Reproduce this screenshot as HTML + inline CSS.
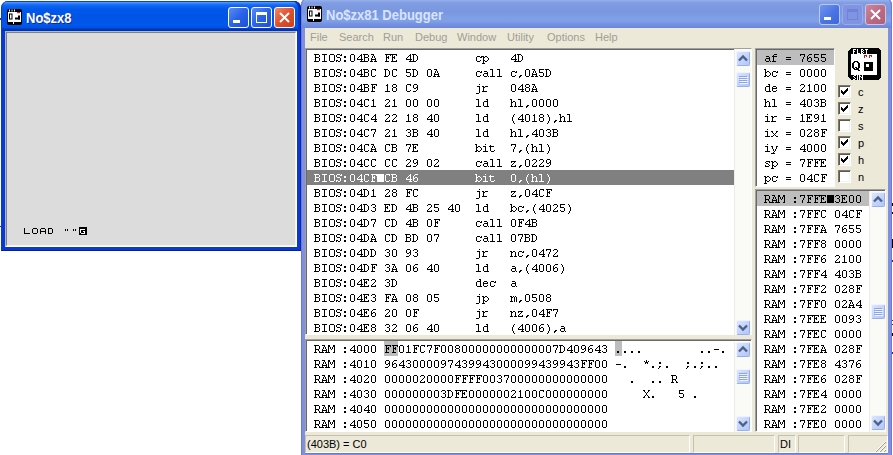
<!DOCTYPE html>
<html><head><meta charset="utf-8">
<style>
*{margin:0;padding:0;box-sizing:border-box}
html,body{width:893px;height:455px;overflow:hidden;background:#fff;position:relative}
.a{position:absolute}
.mono{font-family:"Liberation Mono",monospace;font-size:12px;letter-spacing:-0.2px;line-height:15px;white-space:pre;color:#000;-webkit-text-stroke:0px currentColor}
.sans{font-family:"Liberation Sans",sans-serif}
#lw{left:1px;top:1px;width:300px;height:250px;background:#0A38D0;border-radius:7px 7px 0 0;overflow:hidden;box-shadow:inset 0 -1px 0 #0020A0, inset -1px 0 0 #0828B0}
#lwt{left:0;top:0;width:300px;height:30px;background:linear-gradient(#1040C8 0px,#1040C8 1px,#58A0FF 1px,#3A88FC 2px,#1468F4 4px,#0058EA 8px,#0054E6 16px,#0058EE 24px,#0050E0 27px,#0038B8 28px,#0030A8 30px);border-radius:7px 7px 0 0;box-shadow:inset 1px 0 0 #0A3CC8, inset -1px 0 0 #0026A8, inset -3px 0 0 #0836C4}
#lwc{left:5px;top:31px;width:292px;height:216px;background:#DCDCDC;border-top:1px solid #A8B8E0;border-left:1px solid #A8B8E0;border-right:1px solid #fff;border-bottom:1px solid #fff}
#lwc2{left:6px;top:32px;width:290px;height:214px;border-top:1px solid #808080;border-left:1px solid #808080;border-right:1px solid #F4F4F4;border-bottom:1px solid #F4F4F4}
.btn{width:21px;height:21px;border:1px solid #fff;border-radius:3px}
.bb{background:linear-gradient(135deg,#5A8CF5,#2A62E8 50%,#1E50D8)}
.br{background:linear-gradient(135deg,#F08866,#E0502A 50%,#C8401E)}
#dw{left:301px;top:-2px;width:591px;height:461px;background:#7F90E2;border-radius:7px 7px 0 0;box-shadow:inset 1px 0 0 #6C7AD4, inset -1px 0 0 #6C7AD4}
#dwt{left:0;top:0;width:591px;height:30px;background:linear-gradient(#A8C0F4 0px,#96B0EC 2px,#809CE2 5px,#7A96DF 14px,#7E9EE6 19px,#80A0E8 23px,#7692E0 26px,#6A86DA 30px);border-radius:7px 7px 0 0;box-shadow:inset 1px 0 0 #7080D8, inset -1px 0 0 #6C7AD4}
#menu{left:305px;top:28px;width:583px;height:21px;background:#ECE9D8}
.mi{position:absolute;top:31px;font-family:"Liberation Sans",sans-serif;font-size:11px;color:#A09E94}
#body{left:305px;top:48px;width:583px;height:405px;background:#ECE9D8}
.view{background:#fff;border-top:1px solid #A0A0A0;border-left:1px solid #A0A0A0;border-right:1px solid #fff;border-bottom:1px solid #fff;box-shadow:inset 1px 1px 0 #696969}
.sbtn{width:14px;height:15px;border-radius:2px;background:linear-gradient(135deg,#DCE6FE,#C2D3FC 55%,#B2C6F8);border:1px solid;border-color:#F0F4FF #98B0EA #98B0EA #F0F4FF}
.trk{width:17px;background:#FAFAF6;border-left:1px solid #EEEDE5}
.hl{background:#BDBDBD}
.hld{background:#808080}
.chk{width:13px;height:13px;background:#fff;border-top:1px solid #7C7A6C;border-left:1px solid #7C7A6C;border-right:1px solid #fff;border-bottom:1px solid #fff;box-shadow:inset 1px 1px 0 #5C5A50, inset -1px -1px 0 #F4F2EA}
.fl{font-family:"Liberation Sans",sans-serif;font-size:11px;color:#000}
.sp{border-top:1px solid #C5C1AC;border-left:1px solid #C5C1AC;border-right:1px solid #fff;border-bottom:1px solid #fff;height:18px;top:435px}
</style></head><body>
<div id="lw" class="a"><div id="lwt" class="a"></div></div>
<svg class="a" style="left:7px;top:9px" width="15" height="16" viewBox="0 0 15 16">
<rect x="0" y="0" width="15" height="16" rx="2" fill="#000"/>
<rect x="1" y="3" width="13" height="10" fill="#fff"/>
<rect x="2" y="0.5" width="1" height="2" fill="#fff"/><rect x="4.5" y="0.5" width="1" height="2" fill="#fff"/><rect x="7" y="0.5" width="1" height="2" fill="#fff"/>
<rect x="2" y="4.5" width="3.5" height="6" fill="#000"/><rect x="3" y="5.5" width="1.5" height="4" fill="#fff"/>
<rect x="8" y="8.5" width="5" height="2" fill="#000"/><rect x="11" y="6.5" width="2" height="4" fill="#000"/>
<rect x="10" y="3" width="3" height="1.2" fill="#d02020"/>
<rect x="6" y="13" width="1" height="2" fill="#fff"/>
</svg>
<div class="a sans" style="left:26px;top:10px;font-size:13px;font-weight:bold;color:#fff;text-shadow:1px 1px 0 #0A2C9C;transform:scaleY(1.1);transform-origin:0 0">No$zx8</div>
<div class="a btn bb" style="left:228px;top:7px"></div>
<div class="a btn bb" style="left:251px;top:7px"></div>
<div class="a btn br" style="left:274px;top:7px"></div>
<div class="a" style="left:233px;top:20px;width:7px;height:3px;background:#fff"></div>
<div class="a" style="left:256px;top:12px;width:11px;height:11px;border:1px solid #fff;border-top-width:3px"></div>
<svg class="a" style="left:274px;top:7px" width="21" height="21"><path d="M6 6L15 15M15 6L6 15" stroke="#fff" stroke-width="2"/></svg>
<div id="lwc" class="a"></div><div id="lwc2" class="a"></div>
<svg class="a" style="left:23px;top:227px" width="66" height="9" viewBox="0 0 66 9" shape-rendering="crispEdges">
<g fill="#000">
<rect x="1" y="1" width="1" height="6"/><rect x="1" y="6" width="6" height="1"/>
<rect x="10" y="1" width="4" height="1"/><rect x="10" y="6" width="4" height="1"/><rect x="9" y="2" width="1" height="4"/><rect x="14" y="2" width="1" height="4"/>
<rect x="18" y="1" width="4" height="1"/><rect x="17" y="2" width="1" height="5"/><rect x="22" y="2" width="1" height="5"/><rect x="17" y="4" width="6" height="1"/>
<rect x="25" y="1" width="4" height="1"/><rect x="25" y="6" width="4" height="1"/><rect x="25" y="1" width="1" height="6"/><rect x="29" y="2" width="1" height="4"/>
<rect x="42" y="2" width="1" height="2"/><rect x="44" y="2" width="1" height="2"/>
<rect x="50" y="2" width="1" height="2"/><rect x="52" y="2" width="1" height="2"/>
<rect x="56" y="0" width="8" height="8"/>
</g>
<g fill="#fff"><rect x="58" y="2" width="4" height="1"/><rect x="57" y="2" width="1" height="4"/><rect x="58" y="6" width="4" height="1"/><rect x="61" y="4" width="1" height="2"/><rect x="60" y="4" width="1" height="1"/></g>
</svg>
<div id="dw" class="a"><div id="dwt" class="a"></div></div>
<svg class="a" style="left:307px;top:6px" width="15" height="16" viewBox="0 0 15 16">
<rect x="0" y="0" width="15" height="16" rx="2" fill="#000"/>
<rect x="1" y="3" width="13" height="10" fill="#fff"/>
<rect x="2" y="0.5" width="1" height="2" fill="#fff"/><rect x="4.5" y="0.5" width="1" height="2" fill="#fff"/><rect x="7" y="0.5" width="1" height="2" fill="#fff"/>
<rect x="2" y="4.5" width="3.5" height="6" fill="#000"/><rect x="3" y="5.5" width="1.5" height="4" fill="#fff"/>
<rect x="8" y="8.5" width="5" height="2" fill="#000"/><rect x="11" y="6.5" width="2" height="4" fill="#000"/>
<rect x="10" y="3" width="3" height="1.2" fill="#d02020"/>
<rect x="6" y="13" width="1" height="2" fill="#fff"/>
</svg>
<div class="a sans" style="left:326px;top:7px;font-size:13px;font-weight:bold;color:#D8E4FA;transform:scaleY(1.1);transform-origin:0 0">No$zx81 Debugger</div>
<div class="a btn" style="left:819px;top:4px;background:linear-gradient(135deg,#7096EE,#4A74E4 55%,#3E66DC);border-color:#B8CAF2"></div>
<div class="a btn" style="left:842px;top:4px;background:#8094E2;border-color:#98AAEA"></div>
<div class="a btn" style="left:865px;top:4px;background:linear-gradient(135deg,#C888A0,#B86880 60%,#B0607A);border-color:#D8C0D8"></div>
<div class="a" style="left:824px;top:17px;width:7px;height:3px;background:#fff"></div>
<div class="a" style="left:847px;top:9px;width:11px;height:11px;border:1px solid #6E84D8;border-top-width:3px"></div>
<svg class="a" style="left:865px;top:4px" width="21" height="21"><path d="M6 6L15 15M15 6L6 15" stroke="#fff" stroke-width="2"/></svg>
<div id="menu" class="a"></div><div id="body" class="a"></div>
<div class="mi" style="left:310px">File</div>
<div class="mi" style="left:339px">Search</div>
<div class="mi" style="left:383px">Run</div>
<div class="mi" style="left:415px">Debug</div>
<div class="mi" style="left:457px">Window</div>
<div class="mi" style="left:507px">Utility</div>
<div class="mi" style="left:547px">Options</div>
<div class="mi" style="left:595px">Help</div>
<div class="a view" style="left:305px;top:48px;width:447px;height:287px"></div>
<div class="a hld" style="left:307px;top:170px;width:427px;height:15px"></div>
<div class="a" style="left:377px;top:174px;width:7px;height:8px;background:#fff"></div>
<div class="a trk" style="left:734px;top:49px;height:286px"></div><div class="a sbtn" style="left:736px;top:51px"></div><svg class="a" style="left:736px;top:51px" width="14" height="15"><path d="M3 9.5L7 5.5L11 9.5" fill="none" stroke="#4D6185" stroke-width="2.4"/></svg><div class="a sbtn" style="left:736px;top:72px;height:15px"></div><svg class="a" style="left:736px;top:72px" width="14" height="15"><path d="M3 4.5h8M3 6.5h8M3 8.5h8M3 10.5h8" stroke="#8CA4E4" stroke-width="1"/><path d="M4 5.5h8M4 7.5h8M4 9.5h8M4 11.5h8" stroke="#EEF3FF" stroke-width="1"/></svg><div class="a sbtn" style="left:736px;top:320px"></div><svg class="a" style="left:736px;top:320px" width="14" height="15"><path d="M3 5.5L7 9.5L11 5.5" fill="none" stroke="#4D6185" stroke-width="2.4"/></svg>
<div class="a view" style="left:305px;top:339px;width:447px;height:93px"></div>
<div class="a hl" style="left:384px;top:341px;width:14px;height:15px"></div>
<div class="a hl" style="left:615px;top:341px;width:7px;height:15px"></div>
<div class="a trk" style="left:734px;top:342px;height:90px"></div><div class="a sbtn" style="left:736px;top:342px"></div><svg class="a" style="left:736px;top:342px" width="14" height="15"><path d="M3 9.5L7 5.5L11 9.5" fill="none" stroke="#4D6185" stroke-width="2.4"/></svg><div class="a sbtn" style="left:736px;top:369px;height:15px"></div><svg class="a" style="left:736px;top:369px" width="14" height="15"><path d="M3 4.5h8M3 6.5h8M3 8.5h8M3 10.5h8" stroke="#8CA4E4" stroke-width="1"/><path d="M4 5.5h8M4 7.5h8M4 9.5h8M4 11.5h8" stroke="#EEF3FF" stroke-width="1"/></svg><div class="a sbtn" style="left:736px;top:416px"></div><svg class="a" style="left:736px;top:416px" width="14" height="15"><path d="M3 5.5L7 9.5L11 5.5" fill="none" stroke="#4D6185" stroke-width="2.4"/></svg>
<div class="a view" style="left:755px;top:48px;width:80px;height:139px"></div>
<div class="a hl" style="left:757px;top:50px;width:77px;height:15px"></div>
<div class="a chk" style="left:838px;top:85px"></div>
<svg class="a" style="left:838px;top:85px" width="13" height="13" shape-rendering="crispEdges"><path d="M9 3h1v1h-1zM8 4h2v1h-2zM3 5h1v1h-1zM7 5h3v1h-3zM3 6h2v1h-2zM6 6h3v1h-3zM3 7h5v1h-5zM4 8h3v1h-3zM5 9h1v1h-1z" fill="#000"/></svg>
<div class="a fl" style="left:858px;top:86px">c</div>
<div class="a chk" style="left:838px;top:102px"></div>
<svg class="a" style="left:838px;top:102px" width="13" height="13" shape-rendering="crispEdges"><path d="M9 3h1v1h-1zM8 4h2v1h-2zM3 5h1v1h-1zM7 5h3v1h-3zM3 6h2v1h-2zM6 6h3v1h-3zM3 7h5v1h-5zM4 8h3v1h-3zM5 9h1v1h-1z" fill="#000"/></svg>
<div class="a fl" style="left:858px;top:103px">z</div>
<div class="a chk" style="left:838px;top:119px"></div>
<div class="a fl" style="left:858px;top:120px">s</div>
<div class="a chk" style="left:838px;top:136px"></div>
<svg class="a" style="left:838px;top:136px" width="13" height="13" shape-rendering="crispEdges"><path d="M9 3h1v1h-1zM8 4h2v1h-2zM3 5h1v1h-1zM7 5h3v1h-3zM3 6h2v1h-2zM6 6h3v1h-3zM3 7h5v1h-5zM4 8h3v1h-3zM5 9h1v1h-1z" fill="#000"/></svg>
<div class="a fl" style="left:858px;top:137px">p</div>
<div class="a chk" style="left:838px;top:153px"></div>
<svg class="a" style="left:838px;top:153px" width="13" height="13" shape-rendering="crispEdges"><path d="M9 3h1v1h-1zM8 4h2v1h-2zM3 5h1v1h-1zM7 5h3v1h-3zM3 6h2v1h-2zM6 6h3v1h-3zM3 7h5v1h-5zM4 8h3v1h-3zM5 9h1v1h-1z" fill="#000"/></svg>
<div class="a fl" style="left:858px;top:154px">h</div>
<div class="a chk" style="left:838px;top:170px"></div>
<div class="a fl" style="left:858px;top:171px">n</div>
<svg class="a" style="left:848px;top:48px" width="33" height="32" viewBox="0 0 33 32" shape-rendering="crispEdges">
<path d="M3 0h27l3 3v26l-3 3h-27l-3-3v-26z" fill="#000"/>
<rect x="3" y="6" width="26" height="21" fill="#fff"/>
<path d="M5 1h3v1h-3zM5 2h1v1h-1zM5 3h2v1h-2zM5 4h1v1h-1zM5 5h1v1h-1zM9 1h1v1h-1zM9 2h1v1h-1zM9 3h1v1h-1zM9 4h1v1h-1zM9 5h3v1h-3zM13 1h2v1h-2zM13 2h1v1h-1zM15 2h1v1h-1zM13 3h2v1h-2zM13 4h1v1h-1zM15 4h1v1h-1zM13 5h2v1h-2zM17 1h3v1h-3zM18 2h1v1h-1zM18 3h1v1h-1zM18 4h1v1h-1zM18 5h1v1h-1zM6 27h2v1h-2zM5 28h1v1h-1zM6 29h1v1h-1zM7 30h1v1h-1zM5 31h2v1h-2zM9 27h1v1h-1zM9 28h1v1h-1zM9 29h1v1h-1zM9 30h1v1h-1zM9 31h1v1h-1zM11 27h1v1h-1zM14 27h1v1h-1zM11 28h2v1h-2zM14 28h1v1h-1zM11 29h1v1h-1zM13 29h2v1h-2zM11 30h1v1h-1zM14 30h1v1h-1zM11 31h1v1h-1zM14 31h1v1h-1z" fill="#fff"/>
<path d="M6 13h4v1h-4zM5 14h2v1h-2zM9 14h2v1h-2zM4 15h2v1h-2zM10 15h2v1h-2zM4 16h2v1h-2zM10 16h2v1h-2zM4 17h2v1h-2zM10 17h2v1h-2zM4 18h2v1h-2zM10 18h2v1h-2zM4 19h2v1h-2zM7 19h2v1h-2zM10 19h2v1h-2zM5 20h2v1h-2zM8 20h3v1h-3zM6 21h5v1h-5zM10 22h2v1h-2z" fill="#000"/>
<rect x="16" y="14" width="9" height="9" fill="#000"/>
<rect x="18" y="16" width="3" height="3" fill="#fff"/>
<path d="M16 7h3v1h-3zM16 8h1v1h-1zM18 8h1v1h-1zM16 9h1v1h-1zM21 7h3v1h-3zM21 8h1v1h-1zM23 8h1v1h-1zM21 9h1v1h-1z" fill="#D01010"/>
</svg>
<div class="a view" style="left:755px;top:189px;width:131px;height:243px"></div>
<div class="a hl" style="left:757px;top:191px;width:112px;height:15px"></div>
<div class="a" style="left:827px;top:195px;width:7px;height:8px;background:#000"></div>
<div class="a trk" style="left:869px;top:191px;height:241px"></div><div class="a sbtn" style="left:871px;top:192px"></div><svg class="a" style="left:871px;top:192px" width="14" height="15"><path d="M3 9.5L7 5.5L11 9.5" fill="none" stroke="#4D6185" stroke-width="2.4"/></svg><div class="a sbtn" style="left:871px;top:304px;height:15px"></div><svg class="a" style="left:871px;top:304px" width="14" height="15"><path d="M3 4.5h8M3 6.5h8M3 8.5h8M3 10.5h8" stroke="#8CA4E4" stroke-width="1"/><path d="M4 5.5h8M4 7.5h8M4 9.5h8M4 11.5h8" stroke="#EEF3FF" stroke-width="1"/></svg><div class="a sbtn" style="left:871px;top:415px"></div><svg class="a" style="left:871px;top:415px" width="14" height="15"><path d="M3 5.5L7 9.5L11 5.5" fill="none" stroke="#4D6185" stroke-width="2.4"/></svg>
<div class="a sp" style="left:305px;width:385px"></div>
<div class="a sp" style="left:693px;width:82px"></div>
<div class="a sp" style="left:778px;width:18px"></div>
<div class="a sp" style="left:798px;width:47px"></div>
<div class="a sp" style="left:848px;width:40px"></div>
<div class="a sans" style="left:307px;top:438px;font-size:11px;color:#000">(403B) = C0</div>
<div class="a sans" style="left:780px;top:438px;font-size:11px;color:#000">DI</div>
<div class="a" style="left:305px;top:453px;width:583px;height:1px;background:#6C7AC8"></div>
<svg class="a" style="left:874px;top:440px" width="13" height="13"><path d="M12 1L1 12M12 5L5 12M12 9L9 12" stroke="#fff" stroke-width="1"/><path d="M12 2L2 12M12 6L6 12M12 10L10 12" stroke="#A0A090" stroke-width="1"/></svg>
<div class="a" style="left:0px;top:18px;width:1px;height:2px;background:#403880"></div>
<div class="a" style="left:0px;top:226px;width:1px;height:1px;background:#203080"></div>
<div class="a" style="left:892px;top:203px;width:1px;height:3px;background:#000"></div>
<div class="a" style="left:892px;top:212px;width:1px;height:2px;background:#000"></div>
<div class="a" style="left:892px;top:239px;width:1px;height:9px;background:#000"></div>
<div class="a" style="left:892px;top:260px;width:1px;height:2px;background:#203080"></div>
<div class="a" style="left:892px;top:320px;width:1px;height:1px;background:#203080"></div>
<div class="a" style="left:892px;top:324px;width:1px;height:1px;background:#203080"></div>
<div class="a" style="left:892px;top:333px;width:1px;height:3px;background:#000"></div>
<div class="a" style="left:892px;top:352px;width:1px;height:2px;background:#203080"></div>
<svg class="a" style="left:0;top:0" width="893" height="455" shape-rendering="crispEdges"><defs><path id="g_lp" d="M4 0h1v1h-1zM3 1h1v1h-1zM3 2h1v1h-1zM2 3h1v1h-1zM2 4h1v1h-1zM2 5h1v1h-1zM2 6h1v1h-1zM3 7h1v1h-1zM3 8h1v1h-1zM4 9h1v1h-1z"/><path id="g_rp" d="M2 0h1v1h-1zM3 1h1v1h-1zM3 2h1v1h-1zM4 3h1v1h-1zM4 4h1v1h-1zM4 5h1v1h-1zM4 6h1v1h-1zM3 7h1v1h-1zM3 8h1v1h-1zM2 9h1v1h-1z"/><path id="g_ast" d="M3 0h1v1h-1zM1 1h1v1h-1zM3 1h1v1h-1zM5 1h1v1h-1zM2 2h3v1h-3zM2 3h1v1h-1zM4 3h1v1h-1z"/><path id="g_com" d="M3 6h2v1h-2zM2 7h2v1h-2zM2 8h1v1h-1z"/><path id="g_min" d="M1 4h5v1h-5z"/><path id="g_dot" d="M2 6h2v1h-2zM2 7h2v1h-2z"/><path id="gD0" d="M2 0h3v1h-3zM1 1h1v1h-1zM5 1h1v1h-1zM1 2h1v1h-1zM5 2h1v1h-1zM1 3h1v1h-1zM5 3h1v1h-1zM1 4h1v1h-1zM5 4h1v1h-1zM1 5h1v1h-1zM5 5h1v1h-1zM1 6h1v1h-1zM5 6h1v1h-1zM2 7h3v1h-3z"/><path id="gD1" d="M3 0h1v1h-1zM2 1h2v1h-2zM3 2h1v1h-1zM3 3h1v1h-1zM3 4h1v1h-1zM3 5h1v1h-1zM3 6h1v1h-1zM1 7h5v1h-5z"/><path id="gD2" d="M2 0h3v1h-3zM1 1h1v1h-1zM5 1h1v1h-1zM5 2h1v1h-1zM4 3h1v1h-1zM3 4h1v1h-1zM2 5h1v1h-1zM1 6h1v1h-1zM5 6h1v1h-1zM1 7h5v1h-5z"/><path id="gD3" d="M2 0h3v1h-3zM1 1h1v1h-1zM5 1h1v1h-1zM5 2h1v1h-1zM3 3h2v1h-2zM5 4h1v1h-1zM5 5h1v1h-1zM1 6h1v1h-1zM5 6h1v1h-1zM2 7h3v1h-3z"/><path id="gD4" d="M5 0h1v1h-1zM4 1h2v1h-2zM3 2h1v1h-1zM5 2h1v1h-1zM2 3h1v1h-1zM5 3h1v1h-1zM1 4h1v1h-1zM5 4h1v1h-1zM1 5h6v1h-6zM5 6h1v1h-1zM4 7h3v1h-3z"/><path id="gD5" d="M1 0h5v1h-5zM1 1h1v1h-1zM1 2h1v1h-1zM1 3h4v1h-4zM5 4h1v1h-1zM5 5h1v1h-1zM1 6h1v1h-1zM5 6h1v1h-1zM2 7h3v1h-3z"/><path id="gD6" d="M3 0h3v1h-3zM2 1h1v1h-1zM1 2h1v1h-1zM1 3h1v1h-1zM3 3h2v1h-2zM1 4h2v1h-2zM5 4h1v1h-1zM1 5h1v1h-1zM5 5h1v1h-1zM1 6h1v1h-1zM5 6h1v1h-1zM2 7h3v1h-3z"/><path id="gD7" d="M1 0h5v1h-5zM1 1h1v1h-1zM5 1h1v1h-1zM5 2h1v1h-1zM4 3h1v1h-1zM4 4h1v1h-1zM3 5h1v1h-1zM3 6h1v1h-1zM3 7h1v1h-1z"/><path id="gD8" d="M2 0h3v1h-3zM1 1h1v1h-1zM5 1h1v1h-1zM1 2h1v1h-1zM5 2h1v1h-1zM2 3h3v1h-3zM1 4h1v1h-1zM5 4h1v1h-1zM1 5h1v1h-1zM5 5h1v1h-1zM1 6h1v1h-1zM5 6h1v1h-1zM2 7h3v1h-3z"/><path id="gD9" d="M2 0h3v1h-3zM1 1h1v1h-1zM5 1h1v1h-1zM1 2h1v1h-1zM5 2h1v1h-1zM1 3h1v1h-1zM4 3h2v1h-2zM2 4h2v1h-2zM5 4h1v1h-1zM5 5h1v1h-1zM4 6h1v1h-1zM1 7h3v1h-3z"/><path id="g_col" d="M2 2h2v1h-2zM2 3h2v1h-2zM2 6h2v1h-2zM2 7h2v1h-2z"/><path id="g_sem" d="M2 2h2v1h-2zM2 3h2v1h-2zM2 6h2v1h-2zM2 7h1v1h-1zM1 8h1v1h-1z"/><path id="g_eq" d="M1 3h5v1h-5zM1 5h5v1h-5z"/><path id="gUA" d="M1 0h3v1h-3zM3 1h1v1h-1zM2 2h1v1h-1zM4 2h1v1h-1zM2 3h1v1h-1zM4 3h1v1h-1zM1 4h1v1h-1zM5 4h1v1h-1zM1 5h5v1h-5zM1 6h1v1h-1zM5 6h1v1h-1zM0 7h3v1h-3zM4 7h3v1h-3z"/><path id="gUB" d="M0 0h5v1h-5zM1 1h1v1h-1zM5 1h1v1h-1zM1 2h1v1h-1zM5 2h1v1h-1zM1 3h4v1h-4zM1 4h1v1h-1zM5 4h1v1h-1zM1 5h1v1h-1zM5 5h1v1h-1zM1 6h1v1h-1zM5 6h1v1h-1zM0 7h5v1h-5z"/><path id="gUC" d="M2 0h4v1h-4zM1 1h1v1h-1zM5 1h1v1h-1zM1 2h1v1h-1zM1 3h1v1h-1zM1 4h1v1h-1zM1 5h1v1h-1zM1 6h1v1h-1zM5 6h1v1h-1zM2 7h3v1h-3z"/><path id="gUD" d="M0 0h4v1h-4zM1 1h1v1h-1zM4 1h1v1h-1zM1 2h1v1h-1zM5 2h1v1h-1zM1 3h1v1h-1zM5 3h1v1h-1zM1 4h1v1h-1zM5 4h1v1h-1zM1 5h1v1h-1zM5 5h1v1h-1zM1 6h1v1h-1zM4 6h1v1h-1zM0 7h4v1h-4z"/><path id="gUE" d="M0 0h6v1h-6zM1 1h1v1h-1zM5 1h1v1h-1zM1 2h1v1h-1zM3 2h1v1h-1zM1 3h3v1h-3zM1 4h1v1h-1zM3 4h1v1h-1zM1 5h1v1h-1zM1 6h1v1h-1zM5 6h1v1h-1zM0 7h6v1h-6z"/><path id="gUF" d="M1 0h6v1h-6zM2 1h1v1h-1zM6 1h1v1h-1zM2 2h1v1h-1zM4 2h1v1h-1zM2 3h3v1h-3zM2 4h1v1h-1zM4 4h1v1h-1zM2 5h1v1h-1zM2 6h1v1h-1zM1 7h4v1h-4z"/><path id="gUI" d="M1 0h5v1h-5zM3 1h1v1h-1zM3 2h1v1h-1zM3 3h1v1h-1zM3 4h1v1h-1zM3 5h1v1h-1zM3 6h1v1h-1zM1 7h5v1h-5z"/><path id="gUM" d="M0 0h2v1h-2zM5 0h2v1h-2zM0 1h2v1h-2zM5 1h2v1h-2zM0 2h1v1h-1zM2 2h1v1h-1zM4 2h1v1h-1zM6 2h1v1h-1zM0 3h1v1h-1zM2 3h1v1h-1zM4 3h1v1h-1zM6 3h1v1h-1zM0 4h1v1h-1zM3 4h1v1h-1zM6 4h1v1h-1zM0 5h1v1h-1zM6 5h1v1h-1zM0 6h1v1h-1zM6 6h1v1h-1zM0 7h2v1h-2zM5 7h2v1h-2z"/><path id="gUO" d="M2 0h4v1h-4zM1 1h1v1h-1zM6 1h1v1h-1zM1 2h1v1h-1zM6 2h1v1h-1zM1 3h1v1h-1zM6 3h1v1h-1zM1 4h1v1h-1zM6 4h1v1h-1zM1 5h1v1h-1zM6 5h1v1h-1zM1 6h1v1h-1zM6 6h1v1h-1zM2 7h4v1h-4z"/><path id="gUR" d="M0 0h5v1h-5zM1 1h1v1h-1zM5 1h1v1h-1zM1 2h1v1h-1zM5 2h1v1h-1zM1 3h1v1h-1zM5 3h1v1h-1zM1 4h4v1h-4zM1 5h1v1h-1zM4 5h1v1h-1zM1 6h1v1h-1zM5 6h1v1h-1zM0 7h3v1h-3zM5 7h2v1h-2z"/><path id="gUS" d="M2 0h3v1h-3zM6 0h1v1h-1zM1 1h1v1h-1zM5 1h2v1h-2zM1 2h1v1h-1zM2 3h3v1h-3zM5 4h1v1h-1zM5 5h1v1h-1zM1 6h2v1h-2zM5 6h1v1h-1zM1 7h1v1h-1zM3 7h2v1h-2z"/><path id="gUX" d="M0 0h2v1h-2zM5 0h2v1h-2zM1 1h1v1h-1zM5 1h1v1h-1zM2 2h1v1h-1zM4 2h1v1h-1zM3 3h1v1h-1zM3 4h1v1h-1zM2 5h1v1h-1zM4 5h1v1h-1zM1 6h1v1h-1zM5 6h1v1h-1zM0 7h2v1h-2zM5 7h2v1h-2z"/><path id="gLa" d="M2 2h3v1h-3zM5 3h1v1h-1zM2 4h4v1h-4zM1 5h1v1h-1zM5 5h1v1h-1zM1 6h1v1h-1zM5 6h1v1h-1zM2 7h3v1h-3zM6 7h1v1h-1z"/><path id="gLb" d="M0 0h2v1h-2zM1 1h1v1h-1zM1 2h1v1h-1zM3 2h2v1h-2zM1 3h2v1h-2zM5 3h1v1h-1zM1 4h1v1h-1zM6 4h1v1h-1zM1 5h1v1h-1zM6 5h1v1h-1zM1 6h2v1h-2zM5 6h1v1h-1zM0 7h2v1h-2zM3 7h2v1h-2z"/><path id="gLc" d="M2 2h3v1h-3zM6 2h1v1h-1zM1 3h1v1h-1zM5 3h2v1h-2zM1 4h1v1h-1zM1 5h1v1h-1zM1 6h1v1h-1zM5 6h1v1h-1zM2 7h3v1h-3z"/><path id="gLd" d="M4 0h2v1h-2zM5 1h1v1h-1zM2 2h4v1h-4zM1 3h1v1h-1zM5 3h1v1h-1zM1 4h1v1h-1zM5 4h1v1h-1zM1 5h1v1h-1zM5 5h1v1h-1zM1 6h1v1h-1zM5 6h1v1h-1zM2 7h5v1h-5z"/><path id="gLe" d="M2 2h3v1h-3zM1 3h1v1h-1zM5 3h1v1h-1zM1 4h5v1h-5zM1 5h1v1h-1zM1 6h1v1h-1zM5 6h1v1h-1zM2 7h3v1h-3z"/><path id="gLf" d="M3 0h3v1h-3zM2 1h1v1h-1zM1 2h5v1h-5zM2 3h1v1h-1zM2 4h1v1h-1zM2 5h1v1h-1zM2 6h1v1h-1zM1 7h4v1h-4z"/><path id="gLh" d="M0 0h2v1h-2zM1 1h1v1h-1zM1 2h1v1h-1zM3 2h2v1h-2zM1 3h2v1h-2zM5 3h1v1h-1zM1 4h1v1h-1zM5 4h1v1h-1zM1 5h1v1h-1zM5 5h1v1h-1zM1 6h1v1h-1zM5 6h1v1h-1zM0 7h3v1h-3zM4 7h3v1h-3z"/><path id="gLi" d="M3 0h1v1h-1zM1 2h3v1h-3zM3 3h1v1h-1zM3 4h1v1h-1zM3 5h1v1h-1zM3 6h1v1h-1zM1 7h5v1h-5z"/><path id="gLj" d="M4 0h1v1h-1zM2 2h3v1h-3zM4 3h1v1h-1zM4 4h1v1h-1zM4 5h1v1h-1zM4 6h1v1h-1zM4 7h1v1h-1zM4 8h1v1h-1zM1 9h3v1h-3z"/><path id="gLl" d="M1 0h3v1h-3zM3 1h1v1h-1zM3 2h1v1h-1zM3 3h1v1h-1zM3 4h1v1h-1zM3 5h1v1h-1zM3 6h1v1h-1zM1 7h5v1h-5z"/><path id="gLm" d="M0 2h2v1h-2zM3 2h1v1h-1zM5 2h1v1h-1zM1 3h2v1h-2zM4 3h1v1h-1zM6 3h1v1h-1zM1 4h1v1h-1zM4 4h1v1h-1zM6 4h1v1h-1zM1 5h1v1h-1zM4 5h1v1h-1zM6 5h1v1h-1zM1 6h1v1h-1zM4 6h1v1h-1zM6 6h1v1h-1zM0 7h3v1h-3zM4 7h1v1h-1zM6 7h1v1h-1z"/><path id="gLn" d="M0 2h2v1h-2zM3 2h2v1h-2zM1 3h2v1h-2zM5 3h1v1h-1zM1 4h1v1h-1zM5 4h1v1h-1zM1 5h1v1h-1zM5 5h1v1h-1zM1 6h1v1h-1zM5 6h1v1h-1zM0 7h3v1h-3zM4 7h3v1h-3z"/><path id="gLp" d="M0 2h2v1h-2zM3 2h2v1h-2zM1 3h2v1h-2zM5 3h1v1h-1zM1 4h1v1h-1zM6 4h1v1h-1zM1 5h1v1h-1zM6 5h1v1h-1zM1 6h2v1h-2zM5 6h1v1h-1zM1 7h1v1h-1zM3 7h2v1h-2zM1 8h1v1h-1zM0 9h3v1h-3z"/><path id="gLr" d="M0 2h2v1h-2zM3 2h3v1h-3zM1 3h2v1h-2zM1 4h1v1h-1zM1 5h1v1h-1zM1 6h1v1h-1zM0 7h5v1h-5z"/><path id="gLs" d="M2 2h4v1h-4zM1 3h1v1h-1zM5 3h1v1h-1zM2 4h2v1h-2zM4 5h1v1h-1zM1 6h1v1h-1zM5 6h1v1h-1zM1 7h4v1h-4z"/><path id="gLt" d="M1 1h1v1h-1zM0 2h5v1h-5zM1 3h1v1h-1zM1 4h1v1h-1zM1 5h1v1h-1zM1 6h1v1h-1zM5 6h1v1h-1zM2 7h3v1h-3z"/><path id="gLx" d="M0 2h2v1h-2zM5 2h2v1h-2zM1 3h1v1h-1zM5 3h1v1h-1zM2 4h1v1h-1zM4 4h1v1h-1zM3 5h1v1h-1zM2 6h1v1h-1zM4 6h1v1h-1zM0 7h2v1h-2zM5 7h2v1h-2z"/><path id="gLy" d="M0 2h2v1h-2zM5 2h2v1h-2zM1 3h1v1h-1zM5 3h1v1h-1zM1 4h1v1h-1zM5 4h1v1h-1zM2 5h1v1h-1zM4 5h1v1h-1zM2 6h1v1h-1zM4 6h1v1h-1zM3 7h1v1h-1zM2 8h1v1h-1zM0 9h4v1h-4z"/><path id="gLz" d="M1 2h5v1h-5zM1 3h1v1h-1zM4 3h1v1h-1zM3 4h1v1h-1zM2 5h1v1h-1zM1 6h1v1h-1zM5 6h1v1h-1zM1 7h5v1h-5z"/></defs><use href="#gUB" x="314" y="54"/><use href="#gUI" x="321" y="54"/><use href="#gUO" x="328" y="54"/><use href="#gUS" x="335" y="54"/><use href="#g_col" x="342" y="54"/><use href="#gD0" x="349" y="54"/><use href="#gD4" x="356" y="54"/><use href="#gUB" x="363" y="54"/><use href="#gUA" x="370" y="54"/><use href="#gUF" x="384" y="54"/><use href="#gUE" x="391" y="54"/><use href="#gD4" x="405" y="54"/><use href="#gUD" x="412" y="54"/><use href="#gLc" x="475" y="54"/><use href="#gLp" x="482" y="54"/><use href="#gD4" x="510" y="54"/><use href="#gUD" x="517" y="54"/><use href="#gUB" x="314" y="69"/><use href="#gUI" x="321" y="69"/><use href="#gUO" x="328" y="69"/><use href="#gUS" x="335" y="69"/><use href="#g_col" x="342" y="69"/><use href="#gD0" x="349" y="69"/><use href="#gD4" x="356" y="69"/><use href="#gUB" x="363" y="69"/><use href="#gUC" x="370" y="69"/><use href="#gUD" x="384" y="69"/><use href="#gUC" x="391" y="69"/><use href="#gD5" x="405" y="69"/><use href="#gUD" x="412" y="69"/><use href="#gD0" x="426" y="69"/><use href="#gUA" x="433" y="69"/><use href="#gLc" x="475" y="69"/><use href="#gLa" x="482" y="69"/><use href="#gLl" x="489" y="69"/><use href="#gLl" x="496" y="69"/><use href="#gLc" x="510" y="69"/><use href="#g_com" x="517" y="69"/><use href="#gD0" x="524" y="69"/><use href="#gUA" x="531" y="69"/><use href="#gD5" x="538" y="69"/><use href="#gUD" x="545" y="69"/><use href="#gUB" x="314" y="84"/><use href="#gUI" x="321" y="84"/><use href="#gUO" x="328" y="84"/><use href="#gUS" x="335" y="84"/><use href="#g_col" x="342" y="84"/><use href="#gD0" x="349" y="84"/><use href="#gD4" x="356" y="84"/><use href="#gUB" x="363" y="84"/><use href="#gUF" x="370" y="84"/><use href="#gD1" x="384" y="84"/><use href="#gD8" x="391" y="84"/><use href="#gUC" x="405" y="84"/><use href="#gD9" x="412" y="84"/><use href="#gLj" x="475" y="84"/><use href="#gLr" x="482" y="84"/><use href="#gD0" x="510" y="84"/><use href="#gD4" x="517" y="84"/><use href="#gD8" x="524" y="84"/><use href="#gUA" x="531" y="84"/><use href="#gUB" x="314" y="99"/><use href="#gUI" x="321" y="99"/><use href="#gUO" x="328" y="99"/><use href="#gUS" x="335" y="99"/><use href="#g_col" x="342" y="99"/><use href="#gD0" x="349" y="99"/><use href="#gD4" x="356" y="99"/><use href="#gUC" x="363" y="99"/><use href="#gD1" x="370" y="99"/><use href="#gD2" x="384" y="99"/><use href="#gD1" x="391" y="99"/><use href="#gD0" x="405" y="99"/><use href="#gD0" x="412" y="99"/><use href="#gD0" x="426" y="99"/><use href="#gD0" x="433" y="99"/><use href="#gLl" x="475" y="99"/><use href="#gLd" x="482" y="99"/><use href="#gLh" x="510" y="99"/><use href="#gLl" x="517" y="99"/><use href="#g_com" x="524" y="99"/><use href="#gD0" x="531" y="99"/><use href="#gD0" x="538" y="99"/><use href="#gD0" x="545" y="99"/><use href="#gD0" x="552" y="99"/><use href="#gUB" x="314" y="114"/><use href="#gUI" x="321" y="114"/><use href="#gUO" x="328" y="114"/><use href="#gUS" x="335" y="114"/><use href="#g_col" x="342" y="114"/><use href="#gD0" x="349" y="114"/><use href="#gD4" x="356" y="114"/><use href="#gUC" x="363" y="114"/><use href="#gD4" x="370" y="114"/><use href="#gD2" x="384" y="114"/><use href="#gD2" x="391" y="114"/><use href="#gD1" x="405" y="114"/><use href="#gD8" x="412" y="114"/><use href="#gD4" x="426" y="114"/><use href="#gD0" x="433" y="114"/><use href="#gLl" x="475" y="114"/><use href="#gLd" x="482" y="114"/><use href="#g_lp" x="510" y="114"/><use href="#gD4" x="517" y="114"/><use href="#gD0" x="524" y="114"/><use href="#gD1" x="531" y="114"/><use href="#gD8" x="538" y="114"/><use href="#g_rp" x="545" y="114"/><use href="#g_com" x="552" y="114"/><use href="#gLh" x="559" y="114"/><use href="#gLl" x="566" y="114"/><use href="#gUB" x="314" y="129"/><use href="#gUI" x="321" y="129"/><use href="#gUO" x="328" y="129"/><use href="#gUS" x="335" y="129"/><use href="#g_col" x="342" y="129"/><use href="#gD0" x="349" y="129"/><use href="#gD4" x="356" y="129"/><use href="#gUC" x="363" y="129"/><use href="#gD7" x="370" y="129"/><use href="#gD2" x="384" y="129"/><use href="#gD1" x="391" y="129"/><use href="#gD3" x="405" y="129"/><use href="#gUB" x="412" y="129"/><use href="#gD4" x="426" y="129"/><use href="#gD0" x="433" y="129"/><use href="#gLl" x="475" y="129"/><use href="#gLd" x="482" y="129"/><use href="#gLh" x="510" y="129"/><use href="#gLl" x="517" y="129"/><use href="#g_com" x="524" y="129"/><use href="#gD4" x="531" y="129"/><use href="#gD0" x="538" y="129"/><use href="#gD3" x="545" y="129"/><use href="#gUB" x="552" y="129"/><use href="#gUB" x="314" y="144"/><use href="#gUI" x="321" y="144"/><use href="#gUO" x="328" y="144"/><use href="#gUS" x="335" y="144"/><use href="#g_col" x="342" y="144"/><use href="#gD0" x="349" y="144"/><use href="#gD4" x="356" y="144"/><use href="#gUC" x="363" y="144"/><use href="#gUA" x="370" y="144"/><use href="#gUC" x="384" y="144"/><use href="#gUB" x="391" y="144"/><use href="#gD7" x="405" y="144"/><use href="#gUE" x="412" y="144"/><use href="#gLb" x="475" y="144"/><use href="#gLi" x="482" y="144"/><use href="#gLt" x="489" y="144"/><use href="#gD7" x="510" y="144"/><use href="#g_com" x="517" y="144"/><use href="#g_lp" x="524" y="144"/><use href="#gLh" x="531" y="144"/><use href="#gLl" x="538" y="144"/><use href="#g_rp" x="545" y="144"/><use href="#gUB" x="314" y="159"/><use href="#gUI" x="321" y="159"/><use href="#gUO" x="328" y="159"/><use href="#gUS" x="335" y="159"/><use href="#g_col" x="342" y="159"/><use href="#gD0" x="349" y="159"/><use href="#gD4" x="356" y="159"/><use href="#gUC" x="363" y="159"/><use href="#gUC" x="370" y="159"/><use href="#gUC" x="384" y="159"/><use href="#gUC" x="391" y="159"/><use href="#gD2" x="405" y="159"/><use href="#gD9" x="412" y="159"/><use href="#gD0" x="426" y="159"/><use href="#gD2" x="433" y="159"/><use href="#gLc" x="475" y="159"/><use href="#gLa" x="482" y="159"/><use href="#gLl" x="489" y="159"/><use href="#gLl" x="496" y="159"/><use href="#gLz" x="510" y="159"/><use href="#g_com" x="517" y="159"/><use href="#gD0" x="524" y="159"/><use href="#gD2" x="531" y="159"/><use href="#gD2" x="538" y="159"/><use href="#gD9" x="545" y="159"/><g fill="#fff"><use href="#gUB" x="314" y="174"/><use href="#gUI" x="321" y="174"/><use href="#gUO" x="328" y="174"/><use href="#gUS" x="335" y="174"/><use href="#g_col" x="342" y="174"/><use href="#gD0" x="349" y="174"/><use href="#gD4" x="356" y="174"/><use href="#gUC" x="363" y="174"/><use href="#gUF" x="370" y="174"/><use href="#gUC" x="384" y="174"/><use href="#gUB" x="391" y="174"/><use href="#gD4" x="405" y="174"/><use href="#gD6" x="412" y="174"/><use href="#gLb" x="475" y="174"/><use href="#gLi" x="482" y="174"/><use href="#gLt" x="489" y="174"/><use href="#gD0" x="510" y="174"/><use href="#g_com" x="517" y="174"/><use href="#g_lp" x="524" y="174"/><use href="#gLh" x="531" y="174"/><use href="#gLl" x="538" y="174"/><use href="#g_rp" x="545" y="174"/></g><use href="#gUB" x="314" y="189"/><use href="#gUI" x="321" y="189"/><use href="#gUO" x="328" y="189"/><use href="#gUS" x="335" y="189"/><use href="#g_col" x="342" y="189"/><use href="#gD0" x="349" y="189"/><use href="#gD4" x="356" y="189"/><use href="#gUD" x="363" y="189"/><use href="#gD1" x="370" y="189"/><use href="#gD2" x="384" y="189"/><use href="#gD8" x="391" y="189"/><use href="#gUF" x="405" y="189"/><use href="#gUC" x="412" y="189"/><use href="#gLj" x="475" y="189"/><use href="#gLr" x="482" y="189"/><use href="#gLz" x="510" y="189"/><use href="#g_com" x="517" y="189"/><use href="#gD0" x="524" y="189"/><use href="#gD4" x="531" y="189"/><use href="#gUC" x="538" y="189"/><use href="#gUF" x="545" y="189"/><use href="#gUB" x="314" y="204"/><use href="#gUI" x="321" y="204"/><use href="#gUO" x="328" y="204"/><use href="#gUS" x="335" y="204"/><use href="#g_col" x="342" y="204"/><use href="#gD0" x="349" y="204"/><use href="#gD4" x="356" y="204"/><use href="#gUD" x="363" y="204"/><use href="#gD3" x="370" y="204"/><use href="#gUE" x="384" y="204"/><use href="#gUD" x="391" y="204"/><use href="#gD4" x="405" y="204"/><use href="#gUB" x="412" y="204"/><use href="#gD2" x="426" y="204"/><use href="#gD5" x="433" y="204"/><use href="#gD4" x="447" y="204"/><use href="#gD0" x="454" y="204"/><use href="#gLl" x="475" y="204"/><use href="#gLd" x="482" y="204"/><use href="#gLb" x="510" y="204"/><use href="#gLc" x="517" y="204"/><use href="#g_com" x="524" y="204"/><use href="#g_lp" x="531" y="204"/><use href="#gD4" x="538" y="204"/><use href="#gD0" x="545" y="204"/><use href="#gD2" x="552" y="204"/><use href="#gD5" x="559" y="204"/><use href="#g_rp" x="566" y="204"/><use href="#gUB" x="314" y="219"/><use href="#gUI" x="321" y="219"/><use href="#gUO" x="328" y="219"/><use href="#gUS" x="335" y="219"/><use href="#g_col" x="342" y="219"/><use href="#gD0" x="349" y="219"/><use href="#gD4" x="356" y="219"/><use href="#gUD" x="363" y="219"/><use href="#gD7" x="370" y="219"/><use href="#gUC" x="384" y="219"/><use href="#gUD" x="391" y="219"/><use href="#gD4" x="405" y="219"/><use href="#gUB" x="412" y="219"/><use href="#gD0" x="426" y="219"/><use href="#gUF" x="433" y="219"/><use href="#gLc" x="475" y="219"/><use href="#gLa" x="482" y="219"/><use href="#gLl" x="489" y="219"/><use href="#gLl" x="496" y="219"/><use href="#gD0" x="510" y="219"/><use href="#gUF" x="517" y="219"/><use href="#gD4" x="524" y="219"/><use href="#gUB" x="531" y="219"/><use href="#gUB" x="314" y="234"/><use href="#gUI" x="321" y="234"/><use href="#gUO" x="328" y="234"/><use href="#gUS" x="335" y="234"/><use href="#g_col" x="342" y="234"/><use href="#gD0" x="349" y="234"/><use href="#gD4" x="356" y="234"/><use href="#gUD" x="363" y="234"/><use href="#gUA" x="370" y="234"/><use href="#gUC" x="384" y="234"/><use href="#gUD" x="391" y="234"/><use href="#gUB" x="405" y="234"/><use href="#gUD" x="412" y="234"/><use href="#gD0" x="426" y="234"/><use href="#gD7" x="433" y="234"/><use href="#gLc" x="475" y="234"/><use href="#gLa" x="482" y="234"/><use href="#gLl" x="489" y="234"/><use href="#gLl" x="496" y="234"/><use href="#gD0" x="510" y="234"/><use href="#gD7" x="517" y="234"/><use href="#gUB" x="524" y="234"/><use href="#gUD" x="531" y="234"/><use href="#gUB" x="314" y="249"/><use href="#gUI" x="321" y="249"/><use href="#gUO" x="328" y="249"/><use href="#gUS" x="335" y="249"/><use href="#g_col" x="342" y="249"/><use href="#gD0" x="349" y="249"/><use href="#gD4" x="356" y="249"/><use href="#gUD" x="363" y="249"/><use href="#gUD" x="370" y="249"/><use href="#gD3" x="384" y="249"/><use href="#gD0" x="391" y="249"/><use href="#gD9" x="405" y="249"/><use href="#gD3" x="412" y="249"/><use href="#gLj" x="475" y="249"/><use href="#gLr" x="482" y="249"/><use href="#gLn" x="510" y="249"/><use href="#gLc" x="517" y="249"/><use href="#g_com" x="524" y="249"/><use href="#gD0" x="531" y="249"/><use href="#gD4" x="538" y="249"/><use href="#gD7" x="545" y="249"/><use href="#gD2" x="552" y="249"/><use href="#gUB" x="314" y="264"/><use href="#gUI" x="321" y="264"/><use href="#gUO" x="328" y="264"/><use href="#gUS" x="335" y="264"/><use href="#g_col" x="342" y="264"/><use href="#gD0" x="349" y="264"/><use href="#gD4" x="356" y="264"/><use href="#gUD" x="363" y="264"/><use href="#gUF" x="370" y="264"/><use href="#gD3" x="384" y="264"/><use href="#gUA" x="391" y="264"/><use href="#gD0" x="405" y="264"/><use href="#gD6" x="412" y="264"/><use href="#gD4" x="426" y="264"/><use href="#gD0" x="433" y="264"/><use href="#gLl" x="475" y="264"/><use href="#gLd" x="482" y="264"/><use href="#gLa" x="510" y="264"/><use href="#g_com" x="517" y="264"/><use href="#g_lp" x="524" y="264"/><use href="#gD4" x="531" y="264"/><use href="#gD0" x="538" y="264"/><use href="#gD0" x="545" y="264"/><use href="#gD6" x="552" y="264"/><use href="#g_rp" x="559" y="264"/><use href="#gUB" x="314" y="279"/><use href="#gUI" x="321" y="279"/><use href="#gUO" x="328" y="279"/><use href="#gUS" x="335" y="279"/><use href="#g_col" x="342" y="279"/><use href="#gD0" x="349" y="279"/><use href="#gD4" x="356" y="279"/><use href="#gUE" x="363" y="279"/><use href="#gD2" x="370" y="279"/><use href="#gD3" x="384" y="279"/><use href="#gUD" x="391" y="279"/><use href="#gLd" x="475" y="279"/><use href="#gLe" x="482" y="279"/><use href="#gLc" x="489" y="279"/><use href="#gLa" x="510" y="279"/><use href="#gUB" x="314" y="294"/><use href="#gUI" x="321" y="294"/><use href="#gUO" x="328" y="294"/><use href="#gUS" x="335" y="294"/><use href="#g_col" x="342" y="294"/><use href="#gD0" x="349" y="294"/><use href="#gD4" x="356" y="294"/><use href="#gUE" x="363" y="294"/><use href="#gD3" x="370" y="294"/><use href="#gUF" x="384" y="294"/><use href="#gUA" x="391" y="294"/><use href="#gD0" x="405" y="294"/><use href="#gD8" x="412" y="294"/><use href="#gD0" x="426" y="294"/><use href="#gD5" x="433" y="294"/><use href="#gLj" x="475" y="294"/><use href="#gLp" x="482" y="294"/><use href="#gLm" x="510" y="294"/><use href="#g_com" x="517" y="294"/><use href="#gD0" x="524" y="294"/><use href="#gD5" x="531" y="294"/><use href="#gD0" x="538" y="294"/><use href="#gD8" x="545" y="294"/><use href="#gUB" x="314" y="309"/><use href="#gUI" x="321" y="309"/><use href="#gUO" x="328" y="309"/><use href="#gUS" x="335" y="309"/><use href="#g_col" x="342" y="309"/><use href="#gD0" x="349" y="309"/><use href="#gD4" x="356" y="309"/><use href="#gUE" x="363" y="309"/><use href="#gD6" x="370" y="309"/><use href="#gD2" x="384" y="309"/><use href="#gD0" x="391" y="309"/><use href="#gD0" x="405" y="309"/><use href="#gUF" x="412" y="309"/><use href="#gLj" x="475" y="309"/><use href="#gLr" x="482" y="309"/><use href="#gLn" x="510" y="309"/><use href="#gLz" x="517" y="309"/><use href="#g_com" x="524" y="309"/><use href="#gD0" x="531" y="309"/><use href="#gD4" x="538" y="309"/><use href="#gUF" x="545" y="309"/><use href="#gD7" x="552" y="309"/><use href="#gUB" x="314" y="324"/><use href="#gUI" x="321" y="324"/><use href="#gUO" x="328" y="324"/><use href="#gUS" x="335" y="324"/><use href="#g_col" x="342" y="324"/><use href="#gD0" x="349" y="324"/><use href="#gD4" x="356" y="324"/><use href="#gUE" x="363" y="324"/><use href="#gD8" x="370" y="324"/><use href="#gD3" x="384" y="324"/><use href="#gD2" x="391" y="324"/><use href="#gD0" x="405" y="324"/><use href="#gD6" x="412" y="324"/><use href="#gD4" x="426" y="324"/><use href="#gD0" x="433" y="324"/><use href="#gLl" x="475" y="324"/><use href="#gLd" x="482" y="324"/><use href="#g_lp" x="510" y="324"/><use href="#gD4" x="517" y="324"/><use href="#gD0" x="524" y="324"/><use href="#gD0" x="531" y="324"/><use href="#gD6" x="538" y="324"/><use href="#g_rp" x="545" y="324"/><use href="#g_com" x="552" y="324"/><use href="#gLa" x="559" y="324"/><use href="#gUR" x="314" y="345"/><use href="#gUA" x="321" y="345"/><use href="#gUM" x="328" y="345"/><use href="#g_col" x="342" y="345"/><use href="#gD4" x="349" y="345"/><use href="#gD0" x="356" y="345"/><use href="#gD0" x="363" y="345"/><use href="#gD0" x="370" y="345"/><use href="#gUF" x="384" y="345"/><use href="#gUF" x="391" y="345"/><use href="#gD0" x="398" y="345"/><use href="#gD1" x="405" y="345"/><use href="#gUF" x="412" y="345"/><use href="#gUC" x="419" y="345"/><use href="#gD7" x="426" y="345"/><use href="#gUF" x="433" y="345"/><use href="#gD0" x="440" y="345"/><use href="#gD0" x="447" y="345"/><use href="#gD8" x="454" y="345"/><use href="#gD0" x="461" y="345"/><use href="#gD0" x="468" y="345"/><use href="#gD0" x="475" y="345"/><use href="#gD0" x="482" y="345"/><use href="#gD0" x="489" y="345"/><use href="#gD0" x="496" y="345"/><use href="#gD0" x="503" y="345"/><use href="#gD0" x="510" y="345"/><use href="#gD0" x="517" y="345"/><use href="#gD0" x="524" y="345"/><use href="#gD0" x="531" y="345"/><use href="#gD0" x="538" y="345"/><use href="#gD0" x="545" y="345"/><use href="#gD7" x="552" y="345"/><use href="#gUD" x="559" y="345"/><use href="#gD4" x="566" y="345"/><use href="#gD0" x="573" y="345"/><use href="#gD9" x="580" y="345"/><use href="#gD6" x="587" y="345"/><use href="#gD4" x="594" y="345"/><use href="#gD3" x="601" y="345"/><use href="#g_dot" x="615" y="345"/><use href="#g_dot" x="622" y="345"/><use href="#g_dot" x="629" y="345"/><use href="#g_dot" x="636" y="345"/><use href="#g_dot" x="699" y="345"/><use href="#g_dot" x="706" y="345"/><use href="#g_min" x="713" y="345"/><use href="#g_dot" x="720" y="345"/><use href="#gUR" x="314" y="360"/><use href="#gUA" x="321" y="360"/><use href="#gUM" x="328" y="360"/><use href="#g_col" x="342" y="360"/><use href="#gD4" x="349" y="360"/><use href="#gD0" x="356" y="360"/><use href="#gD1" x="363" y="360"/><use href="#gD0" x="370" y="360"/><use href="#gD9" x="384" y="360"/><use href="#gD6" x="391" y="360"/><use href="#gD4" x="398" y="360"/><use href="#gD3" x="405" y="360"/><use href="#gD0" x="412" y="360"/><use href="#gD0" x="419" y="360"/><use href="#gD0" x="426" y="360"/><use href="#gD0" x="433" y="360"/><use href="#gD9" x="440" y="360"/><use href="#gD7" x="447" y="360"/><use href="#gD4" x="454" y="360"/><use href="#gD3" x="461" y="360"/><use href="#gD9" x="468" y="360"/><use href="#gD9" x="475" y="360"/><use href="#gD4" x="482" y="360"/><use href="#gD3" x="489" y="360"/><use href="#gD0" x="496" y="360"/><use href="#gD0" x="503" y="360"/><use href="#gD0" x="510" y="360"/><use href="#gD0" x="517" y="360"/><use href="#gD9" x="524" y="360"/><use href="#gD9" x="531" y="360"/><use href="#gD4" x="538" y="360"/><use href="#gD3" x="545" y="360"/><use href="#gD9" x="552" y="360"/><use href="#gD9" x="559" y="360"/><use href="#gD4" x="566" y="360"/><use href="#gD3" x="573" y="360"/><use href="#gUF" x="580" y="360"/><use href="#gUF" x="587" y="360"/><use href="#gD0" x="594" y="360"/><use href="#gD0" x="601" y="360"/><use href="#g_min" x="615" y="360"/><use href="#g_dot" x="622" y="360"/><use href="#g_ast" x="643" y="360"/><use href="#g_dot" x="650" y="360"/><use href="#g_sem" x="657" y="360"/><use href="#g_dot" x="664" y="360"/><use href="#g_sem" x="685" y="360"/><use href="#g_dot" x="692" y="360"/><use href="#g_sem" x="699" y="360"/><use href="#g_dot" x="706" y="360"/><use href="#g_dot" x="713" y="360"/><use href="#gUR" x="314" y="375"/><use href="#gUA" x="321" y="375"/><use href="#gUM" x="328" y="375"/><use href="#g_col" x="342" y="375"/><use href="#gD4" x="349" y="375"/><use href="#gD0" x="356" y="375"/><use href="#gD2" x="363" y="375"/><use href="#gD0" x="370" y="375"/><use href="#gD0" x="384" y="375"/><use href="#gD0" x="391" y="375"/><use href="#gD0" x="398" y="375"/><use href="#gD0" x="405" y="375"/><use href="#gD0" x="412" y="375"/><use href="#gD2" x="419" y="375"/><use href="#gD0" x="426" y="375"/><use href="#gD0" x="433" y="375"/><use href="#gD0" x="440" y="375"/><use href="#gD0" x="447" y="375"/><use href="#gUF" x="454" y="375"/><use href="#gUF" x="461" y="375"/><use href="#gUF" x="468" y="375"/><use href="#gUF" x="475" y="375"/><use href="#gD0" x="482" y="375"/><use href="#gD0" x="489" y="375"/><use href="#gD3" x="496" y="375"/><use href="#gD7" x="503" y="375"/><use href="#gD0" x="510" y="375"/><use href="#gD0" x="517" y="375"/><use href="#gD0" x="524" y="375"/><use href="#gD0" x="531" y="375"/><use href="#gD0" x="538" y="375"/><use href="#gD0" x="545" y="375"/><use href="#gD0" x="552" y="375"/><use href="#gD0" x="559" y="375"/><use href="#gD0" x="566" y="375"/><use href="#gD0" x="573" y="375"/><use href="#gD0" x="580" y="375"/><use href="#gD0" x="587" y="375"/><use href="#gD0" x="594" y="375"/><use href="#gD0" x="601" y="375"/><use href="#g_dot" x="629" y="375"/><use href="#g_dot" x="650" y="375"/><use href="#g_dot" x="657" y="375"/><use href="#gUR" x="671" y="375"/><use href="#gUR" x="314" y="390"/><use href="#gUA" x="321" y="390"/><use href="#gUM" x="328" y="390"/><use href="#g_col" x="342" y="390"/><use href="#gD4" x="349" y="390"/><use href="#gD0" x="356" y="390"/><use href="#gD3" x="363" y="390"/><use href="#gD0" x="370" y="390"/><use href="#gD0" x="384" y="390"/><use href="#gD0" x="391" y="390"/><use href="#gD0" x="398" y="390"/><use href="#gD0" x="405" y="390"/><use href="#gD0" x="412" y="390"/><use href="#gD0" x="419" y="390"/><use href="#gD0" x="426" y="390"/><use href="#gD0" x="433" y="390"/><use href="#gD3" x="440" y="390"/><use href="#gUD" x="447" y="390"/><use href="#gUF" x="454" y="390"/><use href="#gUE" x="461" y="390"/><use href="#gD0" x="468" y="390"/><use href="#gD0" x="475" y="390"/><use href="#gD0" x="482" y="390"/><use href="#gD0" x="489" y="390"/><use href="#gD0" x="496" y="390"/><use href="#gD0" x="503" y="390"/><use href="#gD2" x="510" y="390"/><use href="#gD1" x="517" y="390"/><use href="#gD0" x="524" y="390"/><use href="#gD0" x="531" y="390"/><use href="#gUC" x="538" y="390"/><use href="#gD0" x="545" y="390"/><use href="#gD0" x="552" y="390"/><use href="#gD0" x="559" y="390"/><use href="#gD0" x="566" y="390"/><use href="#gD0" x="573" y="390"/><use href="#gD0" x="580" y="390"/><use href="#gD0" x="587" y="390"/><use href="#gD0" x="594" y="390"/><use href="#gD0" x="601" y="390"/><use href="#gUX" x="643" y="390"/><use href="#g_dot" x="650" y="390"/><use href="#gD5" x="678" y="390"/><use href="#g_dot" x="692" y="390"/><use href="#gUR" x="314" y="405"/><use href="#gUA" x="321" y="405"/><use href="#gUM" x="328" y="405"/><use href="#g_col" x="342" y="405"/><use href="#gD4" x="349" y="405"/><use href="#gD0" x="356" y="405"/><use href="#gD4" x="363" y="405"/><use href="#gD0" x="370" y="405"/><use href="#gD0" x="384" y="405"/><use href="#gD0" x="391" y="405"/><use href="#gD0" x="398" y="405"/><use href="#gD0" x="405" y="405"/><use href="#gD0" x="412" y="405"/><use href="#gD0" x="419" y="405"/><use href="#gD0" x="426" y="405"/><use href="#gD0" x="433" y="405"/><use href="#gD0" x="440" y="405"/><use href="#gD0" x="447" y="405"/><use href="#gD0" x="454" y="405"/><use href="#gD0" x="461" y="405"/><use href="#gD0" x="468" y="405"/><use href="#gD0" x="475" y="405"/><use href="#gD0" x="482" y="405"/><use href="#gD0" x="489" y="405"/><use href="#gD0" x="496" y="405"/><use href="#gD0" x="503" y="405"/><use href="#gD0" x="510" y="405"/><use href="#gD0" x="517" y="405"/><use href="#gD0" x="524" y="405"/><use href="#gD0" x="531" y="405"/><use href="#gD0" x="538" y="405"/><use href="#gD0" x="545" y="405"/><use href="#gD0" x="552" y="405"/><use href="#gD0" x="559" y="405"/><use href="#gD0" x="566" y="405"/><use href="#gD0" x="573" y="405"/><use href="#gD0" x="580" y="405"/><use href="#gD0" x="587" y="405"/><use href="#gD0" x="594" y="405"/><use href="#gD0" x="601" y="405"/><use href="#gUR" x="314" y="420"/><use href="#gUA" x="321" y="420"/><use href="#gUM" x="328" y="420"/><use href="#g_col" x="342" y="420"/><use href="#gD4" x="349" y="420"/><use href="#gD0" x="356" y="420"/><use href="#gD5" x="363" y="420"/><use href="#gD0" x="370" y="420"/><use href="#gD0" x="384" y="420"/><use href="#gD0" x="391" y="420"/><use href="#gD0" x="398" y="420"/><use href="#gD0" x="405" y="420"/><use href="#gD0" x="412" y="420"/><use href="#gD0" x="419" y="420"/><use href="#gD0" x="426" y="420"/><use href="#gD0" x="433" y="420"/><use href="#gD0" x="440" y="420"/><use href="#gD0" x="447" y="420"/><use href="#gD0" x="454" y="420"/><use href="#gD0" x="461" y="420"/><use href="#gD0" x="468" y="420"/><use href="#gD0" x="475" y="420"/><use href="#gD0" x="482" y="420"/><use href="#gD0" x="489" y="420"/><use href="#gD0" x="496" y="420"/><use href="#gD0" x="503" y="420"/><use href="#gD0" x="510" y="420"/><use href="#gD0" x="517" y="420"/><use href="#gD0" x="524" y="420"/><use href="#gD0" x="531" y="420"/><use href="#gD0" x="538" y="420"/><use href="#gD0" x="545" y="420"/><use href="#gD0" x="552" y="420"/><use href="#gD0" x="559" y="420"/><use href="#gD0" x="566" y="420"/><use href="#gD0" x="573" y="420"/><use href="#gD0" x="580" y="420"/><use href="#gD0" x="587" y="420"/><use href="#gD0" x="594" y="420"/><use href="#gD0" x="601" y="420"/><use href="#gLa" x="764" y="54"/><use href="#gLf" x="771" y="54"/><use href="#g_eq" x="785" y="54"/><use href="#gD7" x="799" y="54"/><use href="#gD6" x="806" y="54"/><use href="#gD5" x="813" y="54"/><use href="#gD5" x="820" y="54"/><use href="#gLb" x="764" y="69"/><use href="#gLc" x="771" y="69"/><use href="#g_eq" x="785" y="69"/><use href="#gD0" x="799" y="69"/><use href="#gD0" x="806" y="69"/><use href="#gD0" x="813" y="69"/><use href="#gD0" x="820" y="69"/><use href="#gLd" x="764" y="84"/><use href="#gLe" x="771" y="84"/><use href="#g_eq" x="785" y="84"/><use href="#gD2" x="799" y="84"/><use href="#gD1" x="806" y="84"/><use href="#gD0" x="813" y="84"/><use href="#gD0" x="820" y="84"/><use href="#gLh" x="764" y="99"/><use href="#gLl" x="771" y="99"/><use href="#g_eq" x="785" y="99"/><use href="#gD4" x="799" y="99"/><use href="#gD0" x="806" y="99"/><use href="#gD3" x="813" y="99"/><use href="#gUB" x="820" y="99"/><use href="#gLi" x="764" y="114"/><use href="#gLr" x="771" y="114"/><use href="#g_eq" x="785" y="114"/><use href="#gD1" x="799" y="114"/><use href="#gUE" x="806" y="114"/><use href="#gD9" x="813" y="114"/><use href="#gD1" x="820" y="114"/><use href="#gLi" x="764" y="129"/><use href="#gLx" x="771" y="129"/><use href="#g_eq" x="785" y="129"/><use href="#gD0" x="799" y="129"/><use href="#gD2" x="806" y="129"/><use href="#gD8" x="813" y="129"/><use href="#gUF" x="820" y="129"/><use href="#gLi" x="764" y="144"/><use href="#gLy" x="771" y="144"/><use href="#g_eq" x="785" y="144"/><use href="#gD4" x="799" y="144"/><use href="#gD0" x="806" y="144"/><use href="#gD0" x="813" y="144"/><use href="#gD0" x="820" y="144"/><use href="#gLs" x="764" y="159"/><use href="#gLp" x="771" y="159"/><use href="#g_eq" x="785" y="159"/><use href="#gD7" x="799" y="159"/><use href="#gUF" x="806" y="159"/><use href="#gUF" x="813" y="159"/><use href="#gUE" x="820" y="159"/><use href="#gLp" x="764" y="174"/><use href="#gLc" x="771" y="174"/><use href="#g_eq" x="785" y="174"/><use href="#gD0" x="799" y="174"/><use href="#gD4" x="806" y="174"/><use href="#gUC" x="813" y="174"/><use href="#gUF" x="820" y="174"/><use href="#gUR" x="764" y="195"/><use href="#gUA" x="771" y="195"/><use href="#gUM" x="778" y="195"/><use href="#g_col" x="792" y="195"/><use href="#gD7" x="799" y="195"/><use href="#gUF" x="806" y="195"/><use href="#gUF" x="813" y="195"/><use href="#gUE" x="820" y="195"/><use href="#gD3" x="834" y="195"/><use href="#gUE" x="841" y="195"/><use href="#gD0" x="848" y="195"/><use href="#gD0" x="855" y="195"/><use href="#gUR" x="764" y="210"/><use href="#gUA" x="771" y="210"/><use href="#gUM" x="778" y="210"/><use href="#g_col" x="792" y="210"/><use href="#gD7" x="799" y="210"/><use href="#gUF" x="806" y="210"/><use href="#gUF" x="813" y="210"/><use href="#gUC" x="820" y="210"/><use href="#gD0" x="834" y="210"/><use href="#gD4" x="841" y="210"/><use href="#gUC" x="848" y="210"/><use href="#gUF" x="855" y="210"/><use href="#gUR" x="764" y="225"/><use href="#gUA" x="771" y="225"/><use href="#gUM" x="778" y="225"/><use href="#g_col" x="792" y="225"/><use href="#gD7" x="799" y="225"/><use href="#gUF" x="806" y="225"/><use href="#gUF" x="813" y="225"/><use href="#gUA" x="820" y="225"/><use href="#gD7" x="834" y="225"/><use href="#gD6" x="841" y="225"/><use href="#gD5" x="848" y="225"/><use href="#gD5" x="855" y="225"/><use href="#gUR" x="764" y="240"/><use href="#gUA" x="771" y="240"/><use href="#gUM" x="778" y="240"/><use href="#g_col" x="792" y="240"/><use href="#gD7" x="799" y="240"/><use href="#gUF" x="806" y="240"/><use href="#gUF" x="813" y="240"/><use href="#gD8" x="820" y="240"/><use href="#gD0" x="834" y="240"/><use href="#gD0" x="841" y="240"/><use href="#gD0" x="848" y="240"/><use href="#gD0" x="855" y="240"/><use href="#gUR" x="764" y="255"/><use href="#gUA" x="771" y="255"/><use href="#gUM" x="778" y="255"/><use href="#g_col" x="792" y="255"/><use href="#gD7" x="799" y="255"/><use href="#gUF" x="806" y="255"/><use href="#gUF" x="813" y="255"/><use href="#gD6" x="820" y="255"/><use href="#gD2" x="834" y="255"/><use href="#gD1" x="841" y="255"/><use href="#gD0" x="848" y="255"/><use href="#gD0" x="855" y="255"/><use href="#gUR" x="764" y="270"/><use href="#gUA" x="771" y="270"/><use href="#gUM" x="778" y="270"/><use href="#g_col" x="792" y="270"/><use href="#gD7" x="799" y="270"/><use href="#gUF" x="806" y="270"/><use href="#gUF" x="813" y="270"/><use href="#gD4" x="820" y="270"/><use href="#gD4" x="834" y="270"/><use href="#gD0" x="841" y="270"/><use href="#gD3" x="848" y="270"/><use href="#gUB" x="855" y="270"/><use href="#gUR" x="764" y="285"/><use href="#gUA" x="771" y="285"/><use href="#gUM" x="778" y="285"/><use href="#g_col" x="792" y="285"/><use href="#gD7" x="799" y="285"/><use href="#gUF" x="806" y="285"/><use href="#gUF" x="813" y="285"/><use href="#gD2" x="820" y="285"/><use href="#gD0" x="834" y="285"/><use href="#gD2" x="841" y="285"/><use href="#gD8" x="848" y="285"/><use href="#gUF" x="855" y="285"/><use href="#gUR" x="764" y="300"/><use href="#gUA" x="771" y="300"/><use href="#gUM" x="778" y="300"/><use href="#g_col" x="792" y="300"/><use href="#gD7" x="799" y="300"/><use href="#gUF" x="806" y="300"/><use href="#gUF" x="813" y="300"/><use href="#gD0" x="820" y="300"/><use href="#gD0" x="834" y="300"/><use href="#gD2" x="841" y="300"/><use href="#gUA" x="848" y="300"/><use href="#gD4" x="855" y="300"/><use href="#gUR" x="764" y="315"/><use href="#gUA" x="771" y="315"/><use href="#gUM" x="778" y="315"/><use href="#g_col" x="792" y="315"/><use href="#gD7" x="799" y="315"/><use href="#gUF" x="806" y="315"/><use href="#gUE" x="813" y="315"/><use href="#gUE" x="820" y="315"/><use href="#gD0" x="834" y="315"/><use href="#gD0" x="841" y="315"/><use href="#gD9" x="848" y="315"/><use href="#gD3" x="855" y="315"/><use href="#gUR" x="764" y="330"/><use href="#gUA" x="771" y="330"/><use href="#gUM" x="778" y="330"/><use href="#g_col" x="792" y="330"/><use href="#gD7" x="799" y="330"/><use href="#gUF" x="806" y="330"/><use href="#gUE" x="813" y="330"/><use href="#gUC" x="820" y="330"/><use href="#gD0" x="834" y="330"/><use href="#gD0" x="841" y="330"/><use href="#gD0" x="848" y="330"/><use href="#gD0" x="855" y="330"/><use href="#gUR" x="764" y="345"/><use href="#gUA" x="771" y="345"/><use href="#gUM" x="778" y="345"/><use href="#g_col" x="792" y="345"/><use href="#gD7" x="799" y="345"/><use href="#gUF" x="806" y="345"/><use href="#gUE" x="813" y="345"/><use href="#gUA" x="820" y="345"/><use href="#gD0" x="834" y="345"/><use href="#gD2" x="841" y="345"/><use href="#gD8" x="848" y="345"/><use href="#gUF" x="855" y="345"/><use href="#gUR" x="764" y="360"/><use href="#gUA" x="771" y="360"/><use href="#gUM" x="778" y="360"/><use href="#g_col" x="792" y="360"/><use href="#gD7" x="799" y="360"/><use href="#gUF" x="806" y="360"/><use href="#gUE" x="813" y="360"/><use href="#gD8" x="820" y="360"/><use href="#gD4" x="834" y="360"/><use href="#gD3" x="841" y="360"/><use href="#gD7" x="848" y="360"/><use href="#gD6" x="855" y="360"/><use href="#gUR" x="764" y="375"/><use href="#gUA" x="771" y="375"/><use href="#gUM" x="778" y="375"/><use href="#g_col" x="792" y="375"/><use href="#gD7" x="799" y="375"/><use href="#gUF" x="806" y="375"/><use href="#gUE" x="813" y="375"/><use href="#gD6" x="820" y="375"/><use href="#gD0" x="834" y="375"/><use href="#gD2" x="841" y="375"/><use href="#gD8" x="848" y="375"/><use href="#gUF" x="855" y="375"/><use href="#gUR" x="764" y="390"/><use href="#gUA" x="771" y="390"/><use href="#gUM" x="778" y="390"/><use href="#g_col" x="792" y="390"/><use href="#gD7" x="799" y="390"/><use href="#gUF" x="806" y="390"/><use href="#gUE" x="813" y="390"/><use href="#gD4" x="820" y="390"/><use href="#gD0" x="834" y="390"/><use href="#gD0" x="841" y="390"/><use href="#gD0" x="848" y="390"/><use href="#gD0" x="855" y="390"/><use href="#gUR" x="764" y="405"/><use href="#gUA" x="771" y="405"/><use href="#gUM" x="778" y="405"/><use href="#g_col" x="792" y="405"/><use href="#gD7" x="799" y="405"/><use href="#gUF" x="806" y="405"/><use href="#gUE" x="813" y="405"/><use href="#gD2" x="820" y="405"/><use href="#gD0" x="834" y="405"/><use href="#gD0" x="841" y="405"/><use href="#gD0" x="848" y="405"/><use href="#gD0" x="855" y="405"/><use href="#gUR" x="764" y="420"/><use href="#gUA" x="771" y="420"/><use href="#gUM" x="778" y="420"/><use href="#g_col" x="792" y="420"/><use href="#gD7" x="799" y="420"/><use href="#gUF" x="806" y="420"/><use href="#gUE" x="813" y="420"/><use href="#gD0" x="820" y="420"/><use href="#gD0" x="834" y="420"/><use href="#gD0" x="841" y="420"/><use href="#gD0" x="848" y="420"/><use href="#gD0" x="855" y="420"/></svg>
</body></html>
